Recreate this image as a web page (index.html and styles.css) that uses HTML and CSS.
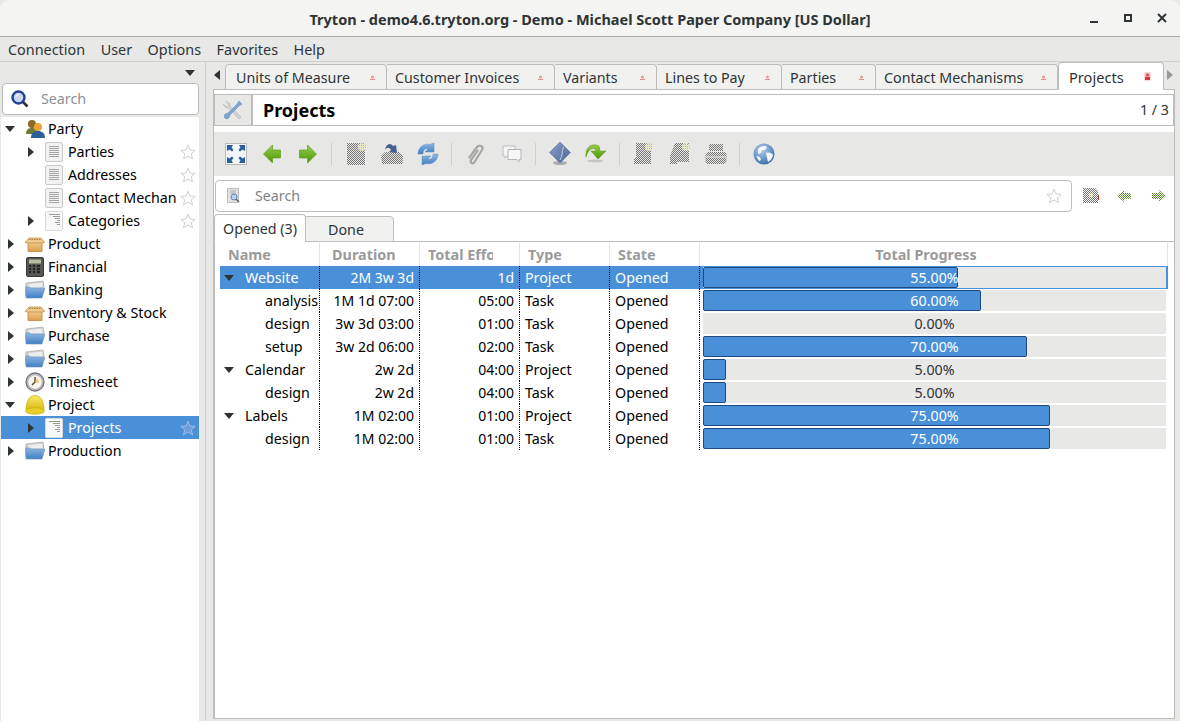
FILE: index.html
```html
<!DOCTYPE html>
<html lang="en">
<head>
<meta charset="utf-8">
<title>Tryton</title>
<link rel="stylesheet" href="styles.css">
</head>
<body>
<svg class="defs" aria-hidden="true">
  <defs>
    <pattern id="chk" width="2" height="2" patternUnits="userSpaceOnUse"><rect width="1" height="1" fill="#757575"/><rect x="1" y="1" width="1" height="1" fill="#757575"/></pattern>
    <pattern id="chky" width="2" height="2" patternUnits="userSpaceOnUse"><rect width="1" height="1" fill="#c4c060"/><rect x="1" y="1" width="1" height="1" fill="#e8e6b8"/></pattern>
    <pattern id="chkg" width="2" height="2" patternUnits="userSpaceOnUse"><rect width="1" height="1" fill="#4e7a16"/><rect x="1" y="1" width="1" height="1" fill="#6f9440"/></pattern>
    <linearGradient id="gGreen" x1="0" y1="0" x2="0" y2="1"><stop offset="0" stop-color="#9ccc50"/><stop offset="1" stop-color="#4a9606"/></linearGradient>
    <linearGradient id="gBlue" x1="0" y1="0" x2="0" y2="1"><stop offset="0" stop-color="#8fb6e0"/><stop offset="1" stop-color="#3f7fc4"/></linearGradient>
    <linearGradient id="gTan" x1="0" y1="0" x2="0" y2="1"><stop offset="0" stop-color="#f2cd8f"/><stop offset="1" stop-color="#d99d4b"/></linearGradient>
    <linearGradient id="gHelm" x1="0" y1="0" x2="0" y2="1"><stop offset="0" stop-color="#fbe96a"/><stop offset="1" stop-color="#d8b80e"/></linearGradient>
    <radialGradient id="gGlobe" cx=".4" cy=".3" r=".8"><stop offset="0" stop-color="#b4d0ee"/><stop offset="1" stop-color="#2f64a8"/></radialGradient>
    <linearGradient id="gDia" x1="0" y1="0" x2="1" y2="1"><stop offset="0" stop-color="#8b9fc9"/><stop offset="1" stop-color="#4d6496"/></linearGradient>

    <symbol id="i-doc" viewBox="0 0 18 20"><rect x=".5" y=".5" width="17" height="19" rx="1.5" fill="#f2f2f2" stroke="#c8c8c8"/><path d="M4 4.500h10M4 6.500h10M4 8.500h10M4 10.500h10M4 12.500h10M4 14.500h10" stroke="#a4a4a4"/></symbol>
    <symbol id="i-list" viewBox="0 0 18 20"><rect x=".5" y=".5" width="17" height="19" rx="1" fill="#f8f8f8" stroke="#d8d8d8"/><path d="M4 3.500h11M8 5.500h7M10 7.500h5M12 9.500h3M10 11.500h5M12 13.500h3" stroke="#9a9a9a"/></symbol>
    <symbol id="i-party" viewBox="0 0 20 20"><circle cx="7" cy="5" r="4" fill="#8a6a20"/><path d="M1 15c0-5 3-6 6-6s6 1 6 6z" fill="#6f7a35"/><circle cx="13" cy="8" r="4" fill="#eda33a"/><path d="M6 19c0-5 3-7 7-7s7 2 7 7z" fill="#2c5f9f"/></symbol>
    <symbol id="i-box" viewBox="0 -3 20 20"><path d="M3 5h14v9.500H3z" fill="url(#gTan)" stroke="#c9954f"/><path d="M0 5.500 4 1h12l4 4.500-3 .5H3z" fill="#edc98f" stroke="#c08b45" stroke-width=".7"/><path d="M4 2.500h12" stroke="#a9793a" stroke-dasharray="1.500 1"/></symbol>
    <symbol id="i-calc" viewBox="0 0 18 20"><rect x=".5" y=".5" width="17" height="19" rx="1.5" fill="#555753" stroke="#3a3a38"/><rect x="3" y="2.500" width="12" height="4" fill="#b5bea0"/><path d="M3 9h2M7 9h2M11 9h3M3 12h2M7 12h2M11 12h3M3 15h2M7 15h2M11 15h3" stroke="#222" stroke-width="2"/></symbol>
    <symbol id="i-folder" viewBox="0 0 20 20"><path d="M0 16 1 3l17-2 1 6H1z" fill="#d4d4d4" stroke="#a8a8a8" stroke-width=".7"/><path d="M3 3.500 18 2v6H3z" fill="#ededed" stroke="#bcbcbc" stroke-width=".6"/><path d="M5 8h15l-3 10H1L1 7h4z" fill="url(#gBlue)" stroke="#6f95c2" stroke-width=".6"/></symbol>
    <symbol id="i-clock" viewBox="0 0 20 20"><circle cx="10" cy="10" r="9" fill="#b9b7c2" stroke="#77747f" stroke-width="1.300"/><circle cx="10" cy="10" r="6.700" fill="#f8f6ea"/><path d="M10 5v5l-3 3" stroke="#5a5040" stroke-width="1.500" fill="none"/><path d="M10 10 13 6l1 5z" fill="#efc95a"/></symbol>
    <symbol id="i-helmet" viewBox="0 0 20 20"><path d="M1 15C1 5 5 .5 10 .5S19 5 19 15z" fill="url(#gHelm)" stroke="#c8ac18" stroke-width=".7"/><ellipse cx="10" cy="16" rx="9.500" ry="3.200" fill="#e8d02a" stroke="#c8ac18" stroke-width=".7"/></symbol>
    <symbol id="i-star" viewBox="0 0 16 16"><path d="M8 1.200 10 6l5.200.4-4 3.300 1.300 5L8 12.100l-4.500 2.600 1.300-5-4-3.300L6 6z" fill="#fff" stroke="#cfcfcf"/></symbol>
    <symbol id="i-starsel" viewBox="0 0 16 16"><path d="M8 1.200 10 6l5.200.4-4 3.300 1.300 5L8 12.100l-4.500 2.600 1.300-5-4-3.300L6 6z" fill="#6f9fd8" stroke="#9dbde6"/></symbol>
    <symbol id="i-mag" viewBox="0 0 18 18"><circle cx="7.500" cy="7.500" r="6" fill="#c7d5ee" stroke="#1f3f9a" stroke-width="2.400"/><path d="M8 4a4 4 0 0 0-3 3" stroke="#fff" fill="none"/><path d="m12 12 4.500 4.500" stroke="#333" stroke-width="2.600"/></symbol>
    <symbol id="i-close" viewBox="0 0 7 7"><circle cx="3.500" cy="3" r="1.600" fill="#ef9a9a"/><path d="M1 5.500h5" stroke="#e29090"/></symbol>
    <symbol id="i-closeon" viewBox="0 0 7 9"><rect x=".5" y=".5" width="6" height="8" fill="#f3b7b7"/><rect x="1" y="5" width="5" height="3" fill="#d63a3a"/><circle cx="3.500" cy="3" r="1.500" fill="#dc5050"/></symbol>
    <symbol id="i-tools" viewBox="0 0 20 20"><path d="M3 1 7 4v2l11 11-2 2L5 8H3L0 4l2 1 2 2 2-2z" fill="#d2d2d2" stroke="#aeaeae" stroke-width=".5"/><path d="M16 1l3 3-3 2-9 9-1 3-3 1-2-2 1-3 3-1 9-9z" fill="#7fa4d0" stroke="#6a92c0" stroke-width=".5"/></symbol>
    <symbol id="i-full" viewBox="-1 -1 24 24"><rect x=".5" y=".5" width="21" height="21" fill="#f3f5f8" stroke="#b9b9b9"/><path d="M2 2h6L6.500 4.500 8.500 7 7 8.500 4.500 6.500 2 8zM20 2h-6l1.500 2.500-2 2.500L15 8.500l2.500-2L20 8zM2 20h6l-1.500-2.500 2-2.500L7 13.500l-2.500 2L2 14zM20 20h-6l1.500-2.500-2-2.500 1.500-1.500 2.500 2L20 14z" fill="#285c9f"/></symbol>
    <symbol id="i-back" viewBox="-3 -2 24 24"><path d="M.5 10 9.500 1v5H17.500v8H9.500v5z" fill="url(#gGreen)" stroke="#62a01a" stroke-width=".7"/></symbol>
    <symbol id="i-fwd" viewBox="-3 -2 24 24"><path d="M17.500 10 8.500 1v5H.5v8h8v5z" fill="url(#gGreen)" stroke="#62a01a" stroke-width=".7"/></symbol>
    <symbol id="i-new" viewBox="-3 -1 24 24"><rect width="18" height="22" fill="url(#chk)"/><circle cx="15" cy="4" r="4" fill="url(#chky)"/></symbol>
    <symbol id="i-save" viewBox="-1 -1 24 24"><path d="M1 21 0 13l4-4h14l4 4-.5 8z" fill="url(#chk)"/><path d="M4 7C5 1 9-1 12 3l3-1 1 8-8-1 2-2C8 4 6 4 4 7z" fill="#45618f"/></symbol>
    <symbol id="i-reload" viewBox="-2 -1 24 24"><path d="M0 11C0 4 6 0 12 1.500L16 0v9H7l3-3C7 5 5 7 5 11z" fill="url(#gBlue)" stroke="#5f8fc6" stroke-width=".5"/><path d="M20 11c0 7-6 11-12 9.500L4 22v-9h9l-3 3c3 1 5-1 5-5z" fill="url(#gBlue)" stroke="#5f8fc6" stroke-width=".5"/></symbol>
    <symbol id="i-clip" viewBox="-3 0 24 24"><path d="m2 15 8-11c2.500-3 7-.5 5 3L7.500 19c-1.500 2.500-5 1-3.500-2L11 7" fill="none" stroke="#a6a6a6" stroke-width="2.200" transform="translate(0 1)"/></symbol>
    <symbol id="i-note" viewBox="-2 -3 24 24"><path d="M1 1h12v10H5l-2 2v-2H1z" fill="#f4f4f4" stroke="#bcbcbc"/><path d="M6 4.500h13v10h-2v2l-2-2H6z" fill="#f6f6f6" stroke="#b4b4b4"/></symbol>
    <symbol id="i-action" viewBox="-1 0 24 24"><ellipse cx="11" cy="21" rx="7" ry="2" fill="#aaa"/><path d="M11 0 21.500 10.500 11 21 .5 10.500z" fill="url(#gDia)" stroke="#5a6f9e" stroke-width=".6"/><path d="M15 5c-3 3 0 5-4 13" stroke="#c6d0e6" fill="none"/></symbol>
    <symbol id="i-relate" viewBox="-1 -1 24 24"><ellipse cx="10" cy="18" rx="8" ry="1.500" fill="#c4c4c2"/><path d="M1 14C0 5 6-1 14 3l1 5h6l-8 8-7-8h5l-1-2C7 4 3 7 1 14z" fill="url(#gGreen)" stroke="#5b9a12" stroke-width=".5"/></symbol>
    <symbol id="i-report" viewBox="-1 0 24 24"><path d="M3 1h15v21H1v-6h2z" fill="url(#chk)"/><circle cx="16" cy="5" r="4" fill="url(#chky)"/></symbol>
    <symbol id="i-mail" viewBox="-1 0 24 24"><path d="M6 1h14v19H8v2H1v-8z" fill="url(#chk)"/><circle cx="17" cy="5" r="4" fill="url(#chky)"/></symbol>
    <symbol id="i-print" viewBox="-1 -1 24 24"><path d="M4 1h14v7H4z" fill="url(#chk)"/><path d="M.5 11l2-2h17l2 2v8l-2 2h-17l-2-2z" fill="url(#chk)"/><path d="M1 14h20" stroke="#e7e7e5"/></symbol>
    <symbol id="i-globe" viewBox="-1 -1 24 24"><circle cx="11" cy="11" r="10.500" fill="url(#gGlobe)"/><path d="M5 6c3-3 7-4 9-2l-2 3-3 0-1 3-3 1zM13 10c3-1 6 0 7 2-1 4-3 6-5 7l-1-4zM3 13l4 1 1 3-2 1z" fill="#f3f6fa"/></symbol>
    <symbol id="i-ssave" viewBox="0 0 17 17"><path d="M1 1h12l3 3v12H1z" fill="url(#chk)"/><circle cx="9" cy="8" r="2" fill="url(#chky)"/><path d="M16.500 8v5" stroke="#b03030"/></symbol>
    <symbol id="i-sback" viewBox="0 0 14 14"><path d="M0 7 7 1v3h7v6H7v3z" fill="url(#chkg)"/></symbol>
    <symbol id="i-sfwd" viewBox="0 0 14 14"><path d="M14 7 7 1v3H0v6h7v3z" fill="url(#chkg)"/></symbol>
    <symbol id="i-ssearch" viewBox="0 0 14 16"><rect x=".5" y=".5" width="11" height="14" fill="#e2e2e2" stroke="#bdbdbd"/><path d="M3 3h6M3 5h6" stroke="#aaa"/><circle cx="7" cy="9" r="3" fill="#bcd0ea" stroke="#5f85b8"/><path d="m9 11 3 3" stroke="#666" stroke-width="1.500"/></symbol>
  </defs>
</svg>

<header class="titlebar">
  <div class="title">Tryton - demo4.6.tryton.org - Demo - Michael Scott Paper Company [US Dollar]</div>
  <div class="winctl">
    <svg class="wc" viewBox="0 0 12 12"><path d="M2 10h8" stroke="#2e3436" stroke-width="2"/></svg>
    <svg class="wc" viewBox="0 0 12 12"><rect x="3" y="3" width="6" height="6" fill="none" stroke="#2e3436" stroke-width="2"/></svg>
    <svg class="wc" viewBox="0 0 12 12"><path d="m2 2 8 8M10 2l-8 8" stroke="#2e3436" stroke-width="2"/></svg>
  </div>
</header>

<nav class="menubar">
  <span>Connection</span><span>User</span><span>Options</span><span>Favorites</span><span>Help</span>
</nav>

<div class="main">
  <aside class="sidebar">
    <div class="side-top"><svg class="side-toggle" viewBox="0 0 10 6"><path d="M0 0h10L5 6z" fill="#2e3436"/></svg></div>
    <div class="side-search"><svg class="mag"><use href="#i-mag"/></svg><span>Search</span></div>
    <ul class="menu">
      <li class="mi"><i class="ar down"></i><svg class="ic"><use href="#i-party"/></svg><span class="lb">Party</span></li>
      <li class="mi sub"><i class="ar right"></i><svg class="ic"><use href="#i-doc"/></svg><span class="lb">Parties</span><svg class="st"><use href="#i-star"/></svg></li>
      <li class="mi sub"><i class="ar none"></i><svg class="ic"><use href="#i-doc"/></svg><span class="lb">Addresses</span><svg class="st"><use href="#i-star"/></svg></li>
      <li class="mi sub"><i class="ar none"></i><svg class="ic"><use href="#i-doc"/></svg><span class="lb">Contact Mechanisms</span><svg class="st"><use href="#i-star"/></svg></li>
      <li class="mi sub"><i class="ar right"></i><svg class="ic"><use href="#i-list"/></svg><span class="lb">Categories</span><svg class="st"><use href="#i-star"/></svg></li>
      <li class="mi"><i class="ar right"></i><svg class="ic"><use href="#i-box"/></svg><span class="lb">Product</span></li>
      <li class="mi"><i class="ar right"></i><svg class="ic"><use href="#i-calc"/></svg><span class="lb">Financial</span></li>
      <li class="mi"><i class="ar right"></i><svg class="ic"><use href="#i-folder"/></svg><span class="lb">Banking</span></li>
      <li class="mi"><i class="ar right"></i><svg class="ic"><use href="#i-box"/></svg><span class="lb">Inventory &amp; Stock</span></li>
      <li class="mi"><i class="ar right"></i><svg class="ic"><use href="#i-folder"/></svg><span class="lb">Purchase</span></li>
      <li class="mi"><i class="ar right"></i><svg class="ic"><use href="#i-folder"/></svg><span class="lb">Sales</span></li>
      <li class="mi"><i class="ar right"></i><svg class="ic"><use href="#i-clock"/></svg><span class="lb">Timesheet</span></li>
      <li class="mi"><i class="ar down"></i><svg class="ic"><use href="#i-helmet"/></svg><span class="lb">Project</span></li>
      <li class="mi sub sel"><i class="ar right"></i><svg class="ic"><use href="#i-list"/></svg><span class="lb">Projects</span><svg class="st"><use href="#i-starsel"/></svg></li>
      <li class="mi"><i class="ar right"></i><svg class="ic"><use href="#i-folder"/></svg><span class="lb">Production</span></li>
    </ul>
  </aside>

  <section class="work">
    <div class="tabstrip">
      <svg class="scr" viewBox="0 0 6 10"><path d="M6 0v10L0 5z" fill="#2e3436"/></svg>
      <div class="tab t1"><span>Units of Measure</span><svg class="x"><use href="#i-close"/></svg></div>
      <div class="tab t2"><span>Customer Invoices</span><svg class="x"><use href="#i-close"/></svg></div>
      <div class="tab t3"><span>Variants</span><svg class="x"><use href="#i-close"/></svg></div>
      <div class="tab t4"><span>Lines to Pay</span><svg class="x"><use href="#i-close"/></svg></div>
      <div class="tab t5"><span>Parties</span><svg class="x"><use href="#i-close"/></svg></div>
      <div class="tab t6"><span>Contact Mechanisms</span><svg class="x"><use href="#i-close"/></svg></div>
      <div class="tab on"><span>Projects</span><svg class="xon"><use href="#i-closeon"/></svg></div>
      <svg class="scr right" viewBox="0 0 6 10"><path d="M0 0v10l6-5z" fill="#9a9a9a"/></svg>
    </div>

    <div class="page">
      <div class="head">
        <div class="head-ic"><svg class="tools"><use href="#i-tools"/></svg></div>
        <div class="head-title"><strong>Projects</strong><span>1 / 3</span></div>
      </div>

      <div class="toolbar">
        <svg class="b"><use href="#i-full"/></svg>
        <svg class="b"><use href="#i-back"/></svg>
        <svg class="b"><use href="#i-fwd"/></svg>
        <i class="sep"></i>
        <svg class="b"><use href="#i-new"/></svg>
        <svg class="b"><use href="#i-save"/></svg>
        <svg class="b"><use href="#i-reload"/></svg>
        <i class="sep"></i>
        <svg class="b"><use href="#i-clip"/></svg>
        <svg class="b"><use href="#i-note"/></svg>
        <i class="sep"></i>
        <svg class="b"><use href="#i-action"/></svg>
        <svg class="b"><use href="#i-relate"/></svg>
        <i class="sep"></i>
        <svg class="b"><use href="#i-report"/></svg>
        <svg class="b"><use href="#i-mail"/></svg>
        <svg class="b"><use href="#i-print"/></svg>
        <i class="sep"></i>
        <svg class="b"><use href="#i-globe"/></svg>
      </div>

      <div class="searchrow">
        <div class="search">
          <svg class="sr-ic"><use href="#i-ssearch"/></svg>
          <span class="sr-text">Search</span>
          <svg class="sr-star"><use href="#i-star"/></svg>
        </div>
        <svg class="sb s1"><use href="#i-ssave"/></svg>
        <svg class="sb s2"><use href="#i-sback"/></svg>
        <svg class="sb s3"><use href="#i-sfwd"/></svg>
      </div>

      <div class="subtabs">
        <div class="stab on">Opened (3)</div>
        <div class="stab">Done</div>
      </div>

      <div class="grid-box">
        <div class="gh">
          <div class="hc c1">Name</div>
          <div class="hc c2">Duration</div>
          <div class="hc c3"><span class="clip">Total Effort</span></div>
          <div class="hc c4">Type</div>
          <div class="hc c5">State</div>
          <div class="hc c6">Total Progress</div>
        </div>

        <div class="gr sel">
          <div class="dc d1"><i class="ar down"></i>Website</div><div class="dc d2">2M 3w 3d</div><div class="dc d2">1d</div><div class="dc d4">Project</div><div class="dc d4">Opened</div>
          <div class="dc d6"><div class="pb"><div class="fill" style="width:55%"></div><span>55.00%</span></div></div>
        </div>
        <div class="gr">
          <div class="dc d1 kid">analysis</div><div class="dc d2">1M 1d 07:00</div><div class="dc d2">05:00</div><div class="dc d4">Task</div><div class="dc d4">Opened</div>
          <div class="dc d6"><div class="pb"><div class="fill" style="width:60%"></div><span class="lt">60.00%</span></div></div>
        </div>
        <div class="gr">
          <div class="dc d1 kid">design</div><div class="dc d2">3w 3d 03:00</div><div class="dc d2">01:00</div><div class="dc d4">Task</div><div class="dc d4">Opened</div>
          <div class="dc d6"><div class="pb"><span>0.00%</span></div></div>
        </div>
        <div class="gr">
          <div class="dc d1 kid">setup</div><div class="dc d2">3w 2d 06:00</div><div class="dc d2">02:00</div><div class="dc d4">Task</div><div class="dc d4">Opened</div>
          <div class="dc d6"><div class="pb"><div class="fill" style="width:70%"></div><span class="lt">70.00%</span></div></div>
        </div>
        <div class="gr">
          <div class="dc d1"><i class="ar down"></i>Calendar</div><div class="dc d2">2w 2d</div><div class="dc d2">04:00</div><div class="dc d4">Project</div><div class="dc d4">Opened</div>
          <div class="dc d6"><div class="pb"><div class="fill" style="width:5%"></div><span>5.00%</span></div></div>
        </div>
        <div class="gr">
          <div class="dc d1 kid">design</div><div class="dc d2">2w 2d</div><div class="dc d2">04:00</div><div class="dc d4">Task</div><div class="dc d4">Opened</div>
          <div class="dc d6"><div class="pb"><div class="fill" style="width:5%"></div><span>5.00%</span></div></div>
        </div>
        <div class="gr">
          <div class="dc d1"><i class="ar down"></i>Labels</div><div class="dc d2">1M 02:00</div><div class="dc d2">01:00</div><div class="dc d4">Project</div><div class="dc d4">Opened</div>
          <div class="dc d6"><div class="pb"><div class="fill" style="width:75%"></div><span class="lt">75.00%</span></div></div>
        </div>
        <div class="gr">
          <div class="dc d1 kid">design</div><div class="dc d2">1M 02:00</div><div class="dc d2">01:00</div><div class="dc d4">Task</div><div class="dc d4">Opened</div>
          <div class="dc d6"><div class="pb"><div class="fill" style="width:75%"></div><span class="lt">75.00%</span></div></div>
        </div>
      </div>
    </div>
  </section>
</div>
</body>
</html>
```

FILE: styles.css
```css
* { box-sizing: border-box; }
html, body { height: 100%; }
body {
  margin: 0;
  width: 1180px;
  height: 721px;
  overflow: hidden;
  display: flex;
  flex-direction: column;
  background: #e8e8e7;
  color: #2e3436;
  font: 14.25px/20px "Noto Sans", "Open Sans", sans-serif;
}
.defs { position: absolute; width: 0; height: 0; }
ul { list-style: none; margin: 0; padding: 0; }

/* title bar */
.titlebar {
  height: 37px;
  flex: none;
  display: flex;
  align-items: center;
  justify-content: center;
  padding-top: 2px;
  position: relative;
  background: #f4f4f3;
  border-bottom: 1px solid #a9a9a6;
  border-radius: 9px 9px 0 0;
}
.title { font-weight: 700; font-size: 14.5px; color: #2e3436; }
.winctl { position: absolute; right: 12px; top: 12px; display: flex; gap: 22px; }
.wc { width: 12px; height: 12px; display: block; }

/* menu bar */
.menubar {
  height: 25px;
  flex: none;
  display: flex;
  align-items: center;
  padding: 2px 0 0 8px;
  gap: 15.500px;
  font-size: 14.400px;
  background: #e8e8e7;
  border-bottom: 1px solid #cfcfcd;
}

.main { flex: 1; display: flex; min-height: 0; }

/* sidebar */
.sidebar {
  width: 206px;
  flex: none;
  padding: 0 6px 0 1px;
  border-right: 1px solid #cfcfcd;
  background: #e8e8e7;
  display: flex;
  flex-direction: column;
}
.side-top { height: 21px; display: flex; justify-content: flex-end; align-items: center; padding-right: 4px; }
.side-toggle { width: 10px; height: 6px; }
.side-search {
  height: 32px;
  margin: 0 0 2px 1px;
  width: 197px;
  background: #fff;
  border: 1px solid #bdbdbb;
  border-radius: 4px;
  display: flex;
  align-items: center;
  padding-left: 8px;
  color: #8c9193;
}
.mag { width: 18px; height: 18px; margin-right: 12px; }
.menu { flex: 1; background: #fff; }
.mi { height: 23px; display: flex; align-items: center; color: #000; padding-left: 4px; }
.mi.sub { padding-left: 24px; }
.mi .ic { width: 20px; height: 20px; margin: 0 3px 0 10px; flex: none; }
.mi.sub .ic { margin: 0 4px 0 9px; }
.lb { overflow: visible; white-space: nowrap; flex: none; }
.sub .lb { overflow: hidden; width: 108px; }
.st { width: 16px; height: 16px; margin-left: 4px; flex: none; }
.mi.sel { background: #4a90d9; color: #fff; }
.mi.sel .ar.right { border-left-color: #2e3436; }

.ar { display: block; width: 0; height: 0; flex: none; }
.ar.right { border: 5px solid transparent; border-left: 6px solid #2e3436; border-right-width: 0; margin-left: 3px; margin-right: 1px; }
.ar.down { border: 5px solid transparent; border-top: 6px solid #2e3436; border-bottom-width: 0; margin: 0; }
.ar.none { width: 10px; }

/* tabs */
.work { flex: 1; min-width: 0; display: flex; flex-direction: column; background: #e8e8e7; }
.tabstrip { height: 28px; flex: none; display: flex; align-items: flex-end; position: relative; z-index: 1; }
.scr { width: 6px; height: 10px; margin: 0 5px 10px 8px; flex: none; }
.scr.right { margin: 0 0 10px 3px; }
.tab {
  height: 26px;
  flex: none;
  display: flex;
  align-items: center;
  justify-content: space-between;
  padding: 1px 10px 0 8px;
  background: #f1f1f0;
  border: 1px solid #bcbcba;
  border-left-width: 0;
  border-radius: 0 4px 0 0;
  color: #2e3436;
  white-space: nowrap;
}
.t1 { width: 162px; padding-left: 10px; border-left-width: 1px; border-radius: 4px 4px 0 0; }
.t2 { width: 168px; }
.t3 { width: 102px; }
.t4 { width: 125px; }
.t5 { width: 94px; }
.t6 { width: 182px; }
.tab.on { width: 106px; height: 28px; padding: 2px 11px 1px 10px; font-size: 14.600px; background: #fff; border-left-width: 1px; border-bottom-color: #fff; border-radius: 4px 4px 0 0; }
.x { width: 7px; height: 7px; flex: none; }
.xon { width: 7px; height: 9px; flex: none; margin-right: 1px; }

/* page */
.page {
  flex: 1;
  min-height: 0;
  margin: -1px 5px 2px 7px;
  border: 1px solid #bcbcba;
  background: #fff;
  display: flex;
  flex-direction: column;
  padding: 4px 0 0;
}
.head { height: 32px; flex: none; display: flex; }
.head-ic { width: 39px; background: #e8e8e7; border: 1px solid #bcbcba; border-right-width: 2px; display: flex; align-items: center; justify-content: center; }
.tools { width: 20px; height: 20px; }
.head-title { flex: 1; display: flex; justify-content: space-between; align-items: center; padding: 0 4px 0 10px; border: 1px solid #bcbcba; border-left: 0; }
.head-title strong { font-size: 18px; color: #000; }
.toolbar { height: 44px; flex: none; margin-top: 6px; background: #e7e7e5; display: flex; align-items: center; padding-left: 4px; }
.b { width: 36px; height: 24px; flex: none; }
.sep { width: 12px; height: 22px; flex: none; display: block; background: linear-gradient(#cfcfcd, #cfcfcd) no-repeat 5px 0 / 1px 100%; }

.searchrow { height: 38px; flex: none; padding: 4px 0 0 1px; display: flex; align-items: flex-start; }
.search { width: 857px; height: 32px; border: 1px solid #bdbdbb; border-radius: 4px; display: flex; align-items: center; padding: 0 9px 0 11px; color: #7d8285; background: #fff; }
.sr-ic { width: 14px; height: 16px; margin-right: 14px; }
.sr-text { flex: 1; }
.sr-star { width: 16px; height: 16px; }
.sb { flex: none; }
.s1 { width: 17px; height: 17px; margin: 7px 0 0 10px; }
.s2 { width: 14px; height: 14px; margin: 9px 0 0 18px; }
.s3 { width: 14px; height: 14px; margin: 9px 0 0 21px; }

.subtabs { height: 28px; flex: none; display: flex; align-items: flex-end; position: relative; z-index: 1; }
.stab { height: 26px; width: 89px; margin-left: -1px; background: #f1f1f0; border: 1px solid #bcbcba; border-radius: 0 4px 0 0; text-align: center; padding: 3px 7px 0 0; }
.stab.on { width: 92px; height: 28px; margin-left: 0; background: #fff; border-bottom-color: #fff; border-radius: 4px 4px 0 0; padding: 4px 0 0; }

.grid-box { flex: 1; margin-top: -1px; padding: 1px 0 0 5px; border-top: 1px solid #bcbcba; border-left: 1px solid #bcbcba; }
.gh, .gr { display: grid; grid-template-columns: 100px 100px 100px 90px 90px 468px; width: 948px; }
.gh { height: 23px; }
.hc { font-weight: 700; font-size: 14.400px; color: #9a9a9a; border-right: 1px solid #e4e4e4; padding-left: 8px; line-height: 24px; overflow: hidden; white-space: nowrap; }
.hc.c2 { padding-left: 12px; }
.hc.c6 { text-align: center; padding: 0 15px 0 0; }
.clip { display: block; width: 65px; overflow: hidden; }
.gr { height: 23px; color: #000; }
.gr.sel { background: #4a90d9; color: #fff; }
.dc { line-height: 23px; border-right: 1px dotted #000; overflow: hidden; white-space: nowrap; }
.d1 { display: flex; align-items: center; padding-left: 25px; }
.d1 .ar { margin: 0 11px 0 -21px; }
.d1.kid { padding-left: 45px; }
.d2 { text-align: right; padding-right: 5px; font-size: 14px; }
.d4 { padding-left: 5px; }
.d6 { border-right: 0; padding: 1px 2px 1px 3px; }
.sel .dc.d1 .ar { border-top-color: #2e3436; }
.pb { position: relative; height: 21px; background: #e8e8e7; }
.fill { height: 100%; background: #4a90d9; border: 1px solid #1c4a80; border-radius: 2px; }
.pb span { position: absolute; left: 0; right: 0; top: 0; text-align: center; line-height: 21px; color: #2e3436; }
.pb span.lt, .sel .pb span { color: #fff; }
```
